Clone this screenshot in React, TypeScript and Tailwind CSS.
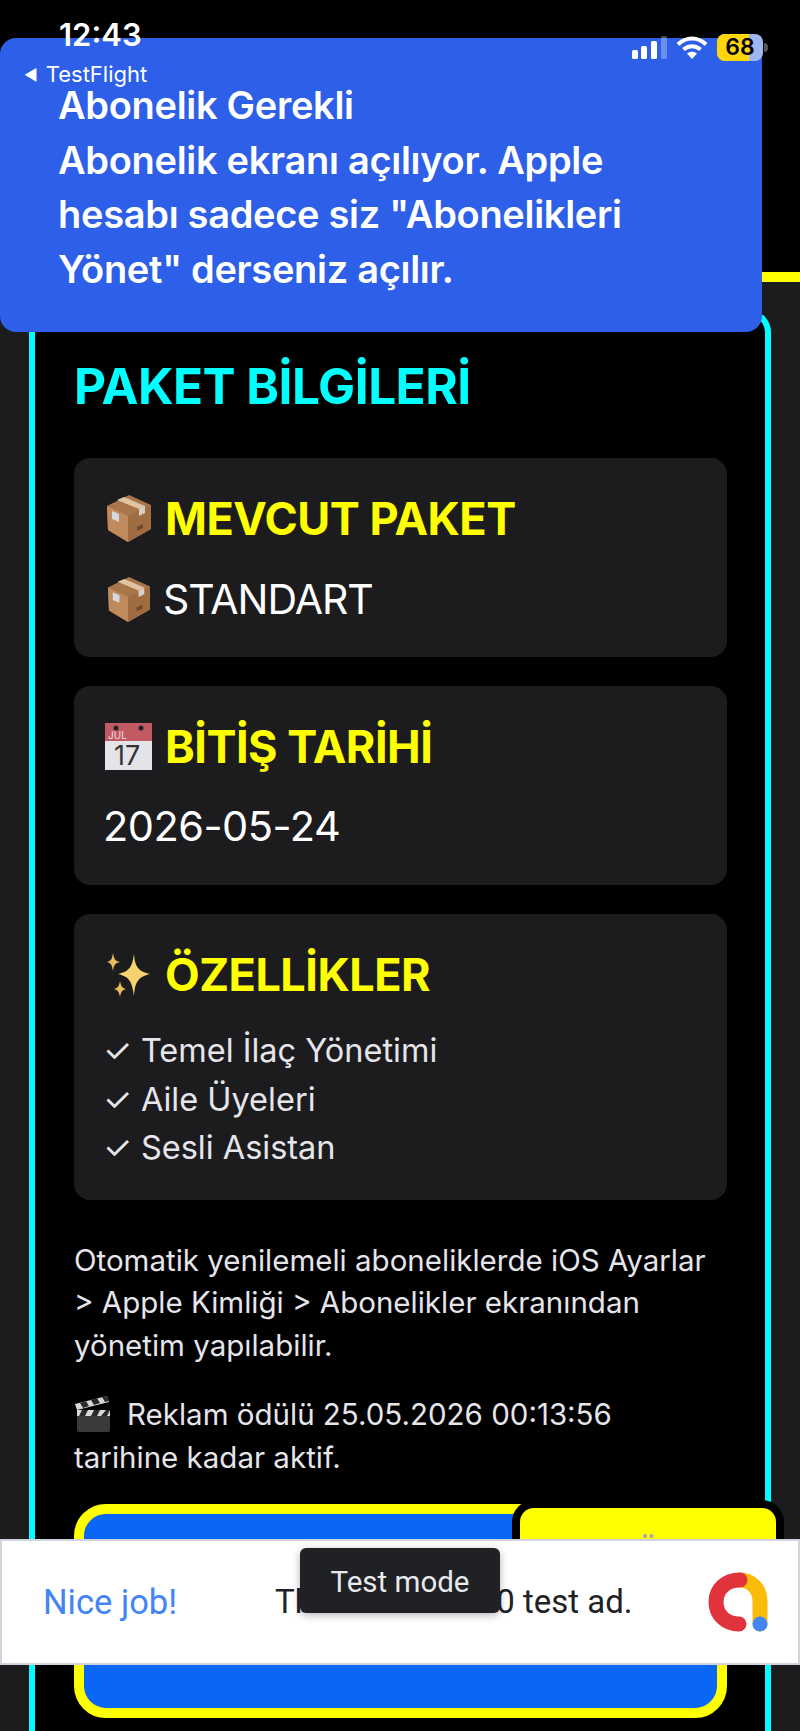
import type { ReactNode } from "react";

function PackageEmoji({ className }: { className: string }) {
	return (
		<svg viewBox="0 0 44 47" className={className}>
			<path d="M22 0 44 10 44 34 21 47 1 35 0 11Z" fill="#a9754a" />
			<path d="M0 11 21 21 21 47 1 35Z" fill="#c08a5c" />
			<path d="M21 21 44 10 44 34 21 47Z" fill="#a06c42" />
			<path d="M10 5 32 14 38 11 17 2Z" fill="#e0c4a4" />
			<path d="M32 14 38 11 38 18 32 21Z" fill="#d8d0c8" />
			<path d="M5 16 12 19 12 27 5 24Z" fill="#d6dae0" />
			<path d="M30 32 36 29 36 33 30 36Z" fill="#6e4a2c" />
		</svg>
	);
}

function CalendarEmoji() {
	return (
		<svg viewBox="0 0 47 47" className="w-[47px] h-[47px]">
			<rect width="47" height="47" fill="#e4e4e8" />
			<rect width="47" height="18" fill="#c25a64" />
			<circle cx="11" cy="5" r="2.500" fill="#222" />
			<circle cx="36" cy="5" r="2.500" fill="#222" />
			<text x="3" y="15.500" fontSize="10" fill="#f2dede" fontFamily="Inter, sans-serif">
				JUL
			</text>
			<text x="9" y="42" fontSize="27" fill="#333" fontFamily="Inter, sans-serif">
				17
			</text>
		</svg>
	);
}

function SparklesEmoji() {
	return (
		<svg viewBox="0 0 44 44" className="w-[44px] h-[44px]">
			<path d="M27 1C28 14 31 18 43 21 31 24 28 29 27 43 25 29 23 24 11 21 23 18 25 14 27 1Z" fill="#f6d36c" />
			<path d="M6 0C7 6 8 8 13 9 8 10 7 12 6 18 5 12 4 10 0 9 4 8 5 6 6 0Z" fill="#e8bc58" />
			<path d="M13 28C14 33 15 35 19 36 15 37 14 39 13 44 12 39 11 37 7 36 11 35 12 33 13 28Z" fill="#e8bc58" />
		</svg>
	);
}

function ClapperEmoji() {
	return (
		<svg viewBox="0 0 38 38" className="w-[38px] h-[38px] inline-block align-[-8px] mr-[15px]">
			<rect x="3" y="15" width="33" height="22" rx="2" fill="#3a3a3c" />
			<path d="M3 15h33v6H3z" fill="#d8d8d8" />
			<path d="M8 15h6l-3 6H5zM20 15h6l-3 6h-6zM32 15h4l-3 6h-6z" fill="#2a2a2a" />
			<path d="M1 9 33 1l2 6L3 15Z" fill="#d8d8d8" />
			<path d="M6 8l6-2 3 5-6 2zM17 5l6-2 3 5-6 2zM28 2l5-1 2 5-4 1z" fill="#2a2a2a" />
		</svg>
	);
}

function InfoCard({ title, icon, children, className }: { title: string; icon: ReactNode; children: ReactNode; className: string }) {
	return (
		<div className={"flex flex-col bg-[#1c1c1e] rounded-[16px] pl-[31px] pr-4 pt-[37px] " + className}>
			<div className="flex items-center gap-[13px] h-[47px]">
				<div className="w-[47px] flex justify-center shrink-0">{icon}</div>
				<h3 className="text-[45px] font-bold leading-none text-[#ffff00] tracking-[-0.5px] whitespace-nowrap">{title}</h3>
			</div>
			{children}
		</div>
	);
}

function StatusBar() {
	return (
		<div className="absolute left-0 top-[17px] w-[768px] flex items-start pl-[59px]">
			<span className="text-[31px] font-semibold leading-[36px]">12:43</span>
			<div className="ml-auto flex items-center gap-[9px] pt-[17px]">
				<div className="flex items-end gap-[3.500px] h-[23px]">
					<div className="w-[6px] h-[9px] rounded-[1.500px] bg-white" />
					<div className="w-[6px] h-[13px] rounded-[1.500px] bg-white" />
					<div className="w-[6.500px] h-[18px] rounded-[1.500px] bg-white" />
					<div className="w-[6.500px] h-[23px] rounded-[1.500px] bg-white/30" />
				</div>
				<svg viewBox="0 0 32 23" className="w-[32px] h-[23px]" fill="none" stroke="#fff" strokeWidth="4">
					<path d="M2 8.500C10 .5 22 .5 30 8.500" />
					<path d="M7.500 13.500C12.500 9 19.500 9 24.500 13.500" />
					<path d="M16 23l-5-5.500c3-2.300 7-2.300 10 0Z" fill="#fff" stroke="none" />
				</svg>
				<div className="flex items-center gap-[1px]">
					<div className="relative w-[46px] h-[27px] rounded-[8px] overflow-hidden bg-[#a0b6ee] flex">
						<div className="w-[32px] h-full bg-[#ffd60a]" />
						<span className="absolute inset-0 text-center text-black text-[23px] font-semibold leading-[27px]">68</span>
					</div>
					<div className="w-[4px] h-[9px] rounded-r-full bg-[#555]" />
				</div>
			</div>
		</div>
	);
}

function AdBanner() {
	return (
		<div className="absolute left-0 top-[1539px] w-[800px] h-[126px] bg-white border-2 border-[#d0d4de] font-['Roboto',sans-serif] flex items-center pl-[41px] pr-[30px]">
			<span className="text-[34.500px] leading-[40px] text-[#4285f4] whitespace-nowrap">Nice job!</span>
			<span className="ml-[98px] text-[33px] leading-[40px] text-[#202124] whitespace-nowrap">This is a 320x50 test ad.</span>
			<svg viewBox="0 0 60 60" className="ml-auto w-[60px] h-[60px] shrink-0" fill="none" strokeWidth="15" strokeLinecap="round">
				<path d="M32 8C43 8 52 17 52 29V52" stroke="#fbbc09" />
				<path d="M32 8C18 8 8 17 8 30S18 52 31 52" stroke="#e1333b" />
				<circle cx="52" cy="52" r="7.500" fill="#4285f4" />
			</svg>
			<div className="absolute left-[298px] top-[7px] w-[200px] h-[65px] rounded-[6px] bg-[#202124] shadow-[0_2px_8px_rgba(0,0,0,0.3)] flex items-center justify-center pt-[3px] text-[29.500px] text-[#e8eaed]">
				Test mode
			</div>
		</div>
	);
}

export default function App() {
	return (
		<div className="relative w-[800px] h-[1731px] overflow-hidden bg-black font-['Inter',sans-serif] text-white">
			<div className="h-[272px] bg-black" />
			<div className="h-[10px] bg-[#ffff00]" />
			<div className="h-[1449px] bg-[#1c1c1e] px-[29px] pt-[28px]">
				<div className="flex flex-col w-[742px] h-[1500px] rounded-t-[22px] border-x-[6px] border-t-[6px] border-[#00ffff] bg-black pl-[39px] pr-[38px] pt-[42px]">
					<h2 className="text-[49.500px] font-bold leading-[56px] tracking-[-0.5px] text-[#00ffff] whitespace-nowrap mb-[44px]">PAKET BİLGİLERİ</h2>

					<div className="flex flex-col gap-[29px]">
						<InfoCard title="MEVCUT PAKET" icon={<PackageEmoji className="w-[44px] h-[47px]" />} className="gap-[32px] pb-[33px]">
							<div className="flex items-center gap-[11px] text-[41px] leading-[50px] tracking-[-1px]">
								<div className="w-[47px] flex justify-center shrink-0">
									<PackageEmoji className="w-[42px] h-[45px]" />
								</div>
								<span>STANDART</span>
							</div>
						</InfoCard>

						<InfoCard title="BİTİŞ TARİHİ" icon={<CalendarEmoji />} className="gap-[31px] pb-[34px]">
							<p className="text-[41.500px] leading-[50px] tracking-[-0.5px] -ml-[2px]">2026-05-24</p>
						</InfoCard>

						<InfoCard title="ÖZELLİKLER" icon={<SparklesEmoji />} className="gap-[29px] pb-[27px]">
							<ul className="text-[32.500px] leading-[48.500px] text-[#e5e5ea] -ml-[2px]">
								<li>✓ Temel İlaç Yönetimi</li>
								<li>✓ Aile Üyeleri</li>
								<li>✓ Sesli Asistan</li>
							</ul>
						</InfoCard>
					</div>

					<div className="flex flex-col gap-[27px] pt-[39px] text-[29.500px] leading-[42.500px] text-[#e5e5ea]">
						<p>Otomatik yenilemeli aboneliklerde iOS Ayarlar &gt; Apple Kimliği &gt; Abonelikler ekranından yönetim yapılabilir.</p>
						<p>
							<ClapperEmoji />
							Reklam ödülü 25.05.2026 00:13:56
							<br />
							tarihine kadar aktif.
						</p>
					</div>

					<div className="mt-[26px] h-[214px] w-[653px] shrink-0 rounded-[32px] border-[10px] border-[#ffff00] bg-[#0a66f5]" />
				</div>
			</div>

			{/* overlays */}
			<div className="absolute left-[512px] top-[1500px] w-[272px] h-[60px] rounded-t-[22px] border-x-[8px] border-t-[8px] border-black bg-[#ffff00]">
				<p className="text-center text-[#aaa] text-[30px] font-semibold leading-[36px] pt-[25px]">Ü</p>
			</div>

			<div className="absolute left-0 top-[38px] w-[762px] h-[294px] rounded-[16px] bg-[#2d5fe8] pl-[58px] pt-[40px] text-[38px] font-semibold leading-[54.500px] tracking-[-0.3px]">
				<p>Abonelik Gerekli</p>
				<p className="w-[640px]">
					Abonelik ekranı açılıyor. Apple
					<br />
					hesabı sadece siz "Abonelikleri
					<br />
					Yönet" derseniz açılır.
				</p>
			</div>

			<span className="absolute left-[24px] top-[61px] text-[22px] leading-[26px] whitespace-nowrap">
				<span className="text-[15px] align-[2px] mr-[8px]">◀</span>TestFlight
			</span>
			<StatusBar />
			<AdBanner />
		</div>
	);
}
